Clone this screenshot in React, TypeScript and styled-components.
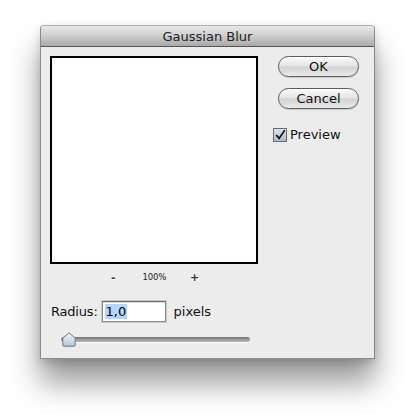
import React, { useState } from 'react';
import styled, { createGlobalStyle } from 'styled-components';

const GlobalStyle = createGlobalStyle`
  html, body {
    margin: 0;
    padding: 0;
    background: #ffffff;
  }
  body {
    font-family: "DejaVu Sans", "Liberation Sans", sans-serif;
  }
`;

const Page = styled.div`
  width: 415px;
  height: 414px;
  padding: 25px 0 0 40px;
  box-sizing: border-box;
  overflow: hidden;
`;

const Window = styled.div`
  width: 335px;
  height: 334px;
  background: #ececec;
  border: 1px solid #8a8a8a;
  border-top-color: #b0b0b0;
  box-sizing: border-box;
  border-radius: 4px 4px 0 0;
  box-shadow: 0 24px 30px rgba(0, 0, 0, 0.4), 0 4px 10px rgba(0, 0, 0, 0.16);
  display: flex;
  flex-direction: column;
`;

const TitleBar = styled.div`
  height: 21px;
  flex: none;
  border-bottom: 1px solid #555;
  border-radius: 3px 3px 0 0;
  background: linear-gradient(#e9e9e9, #d0d0d0 45%, #a9a9a9);
  display: flex;
  align-items: center;
  justify-content: center;
  font-size: 13px;
  color: #222;
  padding-top: 1px;
  box-sizing: border-box;
`;

const Body = styled.div`
  flex: 1;
  display: flex;
  padding: 9px 15px 0 9px;
`;

const LeftColumn = styled.div`
  width: 209px;
  display: flex;
  flex-direction: column;
`;

const PreviewBox = styled.div`
  width: 208px;
  height: 208px;
  background: #fff;
  border: 2px solid #000;
  box-sizing: border-box;
`;

const ZoomRow = styled.div`
  display: flex;
  align-items: center;
  height: 24px;
  margin-top: 1px;
  font-size: 9px;
  color: #222;
`;

const ZoomButton = styled.span<{ $left: number }>`
  margin-left: ${(p) => p.$left}px;
  font-size: 11px;
  font-weight: bold;
  color: #333;
  text-shadow: 0 1px 0 #fff;
`;

const ZoomLabel = styled.span`
  margin-left: 27px;
  font-size: 8.5px;
  letter-spacing: -0.2px;
`;

const RadiusRow = styled.div`
  display: flex;
  align-items: center;
  margin-top: 12px;
  font-size: 13px;
  color: #111;
`;

const RadiusLabel = styled.span`
  margin-left: 1px;
  letter-spacing: -0.2px;
`;

const FieldWrap = styled.div`
  position: relative;
  display: flex;
  margin: 0 8px 0 4px;
`;

const Field = styled.input`
  width: 64px;
  height: 21px;
  box-sizing: border-box;
  margin: 0;
  border: 1px solid #8c8c8c;
  border-top-color: #6d6d6d;
  box-shadow: inset 0 1px 1px rgba(0, 0, 0, 0.15), 0 0 0 1px #c9c9c9;
  padding: 0 3px;
  font-family: "DejaVu Sans", "Liberation Sans", sans-serif;
  font-size: 13px;
  color: #000;
  outline: none;
  background: #fff;
`;

const Highlight = styled.span`
  position: absolute;
  left: 3px;
  top: 3px;
  height: 15px;
  padding: 0 1px;
  background: #b5d5ff;
  font-size: 13px;
  line-height: 15px;
  color: #000;
`;

const SliderRow = styled.div`
  position: relative;
  margin: 10px 0 0 11px;
  width: 189px;
  height: 16px;
`;

const Track = styled.div`
  position: absolute;
  left: 0;
  right: 0;
  top: 5px;
  height: 5px;
  border-radius: 3px;
  background: linear-gradient(#6f6f6f, #9a9a9a 50%, #b8b8b8);
  box-shadow: 0 1px 0 #fafafa;
`;

const Thumb = styled.svg`
  position: absolute;
  left: 1px;
  top: 0;
`;

const RightColumn = styled.div`
  margin-left: 19px;
  display: flex;
  flex-direction: column;
  align-items: flex-start;
`;

const Button = styled.button`
  width: 81px;
  height: 21px;
  border-radius: 11px;
  border: 1px solid #5c5c5c;
  background: linear-gradient(#fbfbfb, #e4e4e4 48%, #d2d2d2 52%, #eaeaea);
  box-shadow: inset 0 1px 1px rgba(255, 255, 255, 0.9), 0 1px 1px rgba(0, 0, 0, 0.15);
  font-family: "DejaVu Sans", "Liberation Sans", sans-serif;
  font-size: 13px;
  color: #111;
  padding: 0;
  margin-bottom: 11px;
  cursor: default;
`;

const CheckRow = styled.label`
  display: flex;
  align-items: center;
  margin: 7px 0 0 -5px;
  font-size: 13px;
  color: #111;
  gap: 3px;
`;

const CheckBox = styled.span`
  width: 14px;
  height: 14px;
  box-sizing: border-box;
  border: 1px solid #6a6a6a;
  background: linear-gradient(#d8e2ec, #aebccb);
  display: flex;
  align-items: center;
  justify-content: center;
`;

export default function App() {
  const [preview, setPreview] = useState(true);

  return (
    <Page>
      <GlobalStyle />
      <Window>
        <TitleBar>Gaussian Blur</TitleBar>
        <Body>
          <LeftColumn>
            <PreviewBox />
            <ZoomRow>
              <ZoomButton $left={61}>-</ZoomButton>
              <ZoomLabel>100%</ZoomLabel>
              <ZoomButton $left={24}>+</ZoomButton>
            </ZoomRow>
            <RadiusRow>
              <RadiusLabel>Radius:</RadiusLabel>
              <FieldWrap>
                <Field defaultValue="" readOnly />
                <Highlight>1,0</Highlight>
              </FieldWrap>
              <span>pixels</span>
            </RadiusRow>
            <SliderRow>
              <Track />
              <Thumb width="14" height="15" viewBox="0 0 14 15">
                <defs>
                  <linearGradient id="thumbFill" x1="0" y1="0" x2="0" y2="1">
                    <stop offset="0" stopColor="#f2f6fa" />
                    <stop offset="1" stopColor="#b7c6d4" />
                  </linearGradient>
                </defs>
                <path
                  d="M7 0.8 L13.2 6 V13 Q13.2 14.2 12 14.2 H2 Q0.8 14.2 0.8 13 V6 Z"
                  fill="url(#thumbFill)"
                  stroke="#6b7480"
                  strokeWidth="1"
                />
              </Thumb>
            </SliderRow>
          </LeftColumn>
          <RightColumn>
            <Button>OK</Button>
            <Button>Cancel</Button>
            <CheckRow onClick={() => setPreview(!preview)}>
              <CheckBox>
                {preview && (
                  <svg width="14" height="14" viewBox="0 0 14 14">
                    <path d="M2.5 7 L6 11 L12.5 1.5" fill="none" stroke="#111" strokeWidth="2" />
                  </svg>
                )}
              </CheckBox>
              Preview
            </CheckRow>
          </RightColumn>
        </Body>
      </Window>
    </Page>
  );
}
